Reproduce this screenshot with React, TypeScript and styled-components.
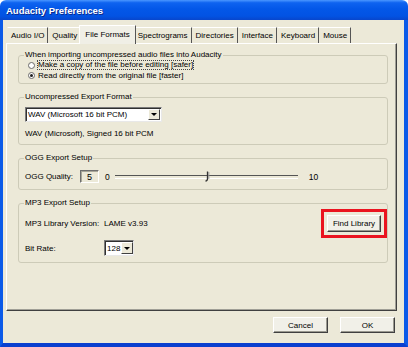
import styled, { createGlobalStyle } from "styled-components";

const Global = createGlobalStyle`
  html, body { margin: 0; padding: 0; background: #fff; }
  body { font-family: "Liberation Sans", Arial, sans-serif; font-size: 8px; color: #000; }
  * { box-sizing: border-box; }
`;

const Window = styled.div`
  width: 408px;
  height: 347px;
  display: flex;
  flex-direction: column;
`;

const TitleBar = styled.div`
  height: 20px;
  flex: none;
  display: flex;
  align-items: center;
  padding-left: 6px;
  border-radius: 6px 6px 0 0;
  background: linear-gradient(180deg, #4a97ff 0%, #0e63f0 14%, #0357e8 45%, #0253e3 80%, #0846cc 100%);
  color: #fff;
  font-weight: bold;
  font-size: 9.5px;
  text-shadow: 1px 1px 0 #0c2a8a;
`;

const Frame = styled.div`
  flex: 1;
  display: flex;
  flex-direction: column;
  background: #ece9d8;
  border-left: 3px solid #0b5ae8;
  border-right: 4px solid #0b5ae8;
  border-bottom: 4px solid #0a3fcf;
  padding: 5px 7px 0 3px;
`;

const TabStrip = styled.div`
  height: 18px;
  display: flex;
  align-items: flex-end;
  padding-left: 1px;
`;

const Tab = styled.div<{ $active?: boolean }>`
  position: relative;
  height: ${(p) => (p.$active ? 19 : 16)}px;
  line-height: ${(p) => (p.$active ? 18 : 16)}px;
  padding: 0 ${(p) => (p.$active ? 5 : 3)}px;
  margin: ${(p) => (p.$active ? "0 -2px -1px -2px" : "0")};
  z-index: ${(p) => (p.$active ? 1 : 0)};
  background: ${(p) => (p.$active ? "#f0efe6" : "#ece9d8")};
  border-top: 1px solid #fff;
  border-left: 1px solid ${(p) => (p.$active ? "#fff" : "transparent")};
  border-right: 1px solid #555;
  white-space: nowrap;
`;

const Panel = styled.div`
  height: 268px;
  display: flex;
  flex-direction: column;
  gap: 8px;
  padding: 6px 8px 0 11px;
  border-top: 1px solid #fff;
  border-left: 1px solid #fff;
  border-right: 1px solid #404040;
  border-bottom: 1px solid #404040;
  box-shadow: inset -1px -1px 0 #a09f96;
`;

const Group = styled.fieldset<{ $h: number }>`
  margin: 0;
  padding: 0 6px;
  min-width: 0;
  height: ${(p) => p.$h}px;
  border: 1px solid #cdcbb8;
  border-radius: 3px;
`;

const Legend = styled.legend`
  padding: 0 1px;
  margin-left: -1px;
  line-height: 10px;
  font-size: 8px;
`;

const RadioRow = styled.div`
  height: 10px;
  display: flex;
  align-items: center;
  gap: 3px;
  padding-left: 3px;
`;

const Radio = styled.span<{ $checked?: boolean }>`
  width: 7px;
  height: 7px;
  border-radius: 50%;
  border: 1px solid #6a6a6a;
  background: #fff;
  display: flex;
  align-items: center;
  justify-content: center;
  &::after {
    content: "";
    width: 3px;
    height: 3px;
    border-radius: 50%;
    background: ${(p) => (p.$checked ? "#222" : "transparent")};
  }
`;

const Focused = styled.span`
  outline: 1px dotted #444;
  line-height: 8px;
`;

const Select = styled.div<{ $w: number; $h: number; $top?: number }>`
  width: ${(p) => p.$w}px;
  height: ${(p) => p.$h}px;
  margin-top: ${(p) => p.$top ?? 0}px;
  display: flex;
  align-items: center;
  gap: 1px;
  background: #fff;
  border: 1px solid;
  border-color: #7a7a7a #e8e8e8 #e8e8e8 #7a7a7a;
  box-shadow: inset 1px 1px 0 #303030;
  padding: 1px 1px 1px 2px;
`;

const SelectText = styled.span`
  flex: 1;
  white-space: nowrap;
`;

const DropButton = styled.span`
  width: 12px;
  height: 100%;
  flex: none;
  display: flex;
  align-items: center;
  justify-content: center;
  background: #ece9d8;
  border: 1px solid;
  border-color: #fff #404040 #404040 #fff;
  &::after {
    content: "";
    border-left: 3px solid transparent;
    border-right: 3px solid transparent;
    border-top: 3px solid #000;
  }
`;

const Line = styled.div<{ $top?: number; $h?: number }>`
  margin-top: ${(p) => p.$top ?? 0}px;
  height: ${(p) => p.$h ?? 10}px;
  display: flex;
  align-items: center;
  white-space: nowrap;
`;

const Label = styled.span<{ $w?: number }>`
  width: ${(p) => (p.$w ? `${p.$w}px` : "auto")};
  flex: none;
`;

const ValueBox = styled.span`
  width: 19px;
  height: 13px;
  margin-left: 7px;
  display: flex;
  align-items: center;
  justify-content: center;
  border: 1px solid;
  border-color: #6e6e6e #fff #fff #6e6e6e;
  box-shadow: inset 1px 1px 0 #a7a699;
  font-size: 9px;
`;

const Tick = styled.span<{ $ml: number }>`
  margin-left: ${(p) => p.$ml}px;
  font-size: 8.5px;
`;

const Slider = styled.div`
  position: relative;
  width: 183px;
  height: 13px;
  margin-left: 5px;
  display: flex;
  align-items: center;
  &::before {
    content: "";
    width: 100%;
    height: 2px;
    border-top: 1px solid #555;
    border-bottom: 1px solid #fff;
  }
`;

const Thumb = styled.svg`
  position: absolute;
  left: 90px;
  top: 1px;
`;

const Button = styled.button<{ $w: number; $h: number; $mark?: boolean }>`
  width: ${(p) => p.$w}px;
  height: ${(p) => p.$h}px;
  padding: 0;
  font-family: "Liberation Sans", Arial, sans-serif;
  font-size: 8px;
  color: #000;
  background: #f1f0e8;
  border: 1px solid;
  border-color: #fff #404040 #404040 #fff;
  box-shadow: inset -1px -1px 0 #9a998f;
  outline: ${(p) => (p.$mark ? "3px solid #ea1420" : "none")};
  outline-offset: 3px;
`;

const Spacer = styled.span`
  flex: 1;
`;

const ButtonRow = styled.div`
  display: flex;
  justify-content: flex-end;
  gap: 12px;
  margin-top: 6px;
  padding-right: 2px;
`;

const tabs = ["Audio I/O", "Quality", "File Formats", "Spectrograms", "Directories", "Interface", "Keyboard", "Mouse"];

export default function App() {
  return (
    <>
      <Global />
      <Window>
        <TitleBar>Audacity Preferences</TitleBar>
        <Frame>
          <TabStrip>
            {tabs.map((t) => (
              <Tab key={t} $active={t === "File Formats"}>
                {t}
              </Tab>
            ))}
          </TabStrip>
          <Panel>
            <Group $h={34}>
              <Legend>When importing uncompressed audio files into Audacity</Legend>
              <RadioRow>
                <Radio />
                <Focused>Make a copy of the file before editing [safer]</Focused>
              </RadioRow>
              <RadioRow>
                <Radio $checked />
                <span>Read directly from the original file [faster]</span>
              </RadioRow>
            </Group>
            <Group $h={53}>
              <Legend>Uncompressed Export Format</Legend>
              <Select $w={137} $h={15} $top={5}>
                <SelectText>WAV (Microsoft 16 bit PCM)</SelectText>
                <DropButton />
              </Select>
              <Line $top={6}>WAV (Microsoft), Signed 16 bit PCM</Line>
            </Group>
            <Group $h={37}>
              <Legend>OGG Export Setup</Legend>
              <Line $top={7} $h={13}>
                <Label>OGG Quality:</Label>
                <ValueBox>5</ValueBox>
                <Tick $ml={6}>0</Tick>
                <Slider>
                  <Thumb width="6" height="11" viewBox="0 0 6 11">
                    <path d="M2.5 0.5 V7.5 Q2.5 10 0.5 10" fill="none" stroke="#333" strokeWidth="1.3" />
                    <path d="M3.8 1 V8" fill="none" stroke="#999" strokeWidth="1" />
                  </Thumb>
                </Slider>
                <Tick $ml={11}>10</Tick>
              </Line>
            </Group>
            <Group $h={65}>
              <Legend>MP3 Export Setup</Legend>
              <Line $top={7} $h={17}>
                <Label $w={79}>MP3 Library Version:</Label>
                <span>LAME v3.93</span>
                <Spacer />
                <Button $w={54} $h={17} $mark>
                  Find Library
                </Button>
              </Line>
              <Line $top={8} $h={16}>
                <Label $w={79}>Bit Rate:</Label>
                <Select $w={30} $h={16}>
                  <SelectText>128</SelectText>
                  <DropButton />
                </Select>
              </Line>
            </Group>
          </Panel>
          <ButtonRow>
            <Button $w={55} $h={16}>Cancel</Button>
            <Button $w={55} $h={16}>OK</Button>
          </ButtonRow>
        </Frame>
      </Window>
    </>
  );
}
